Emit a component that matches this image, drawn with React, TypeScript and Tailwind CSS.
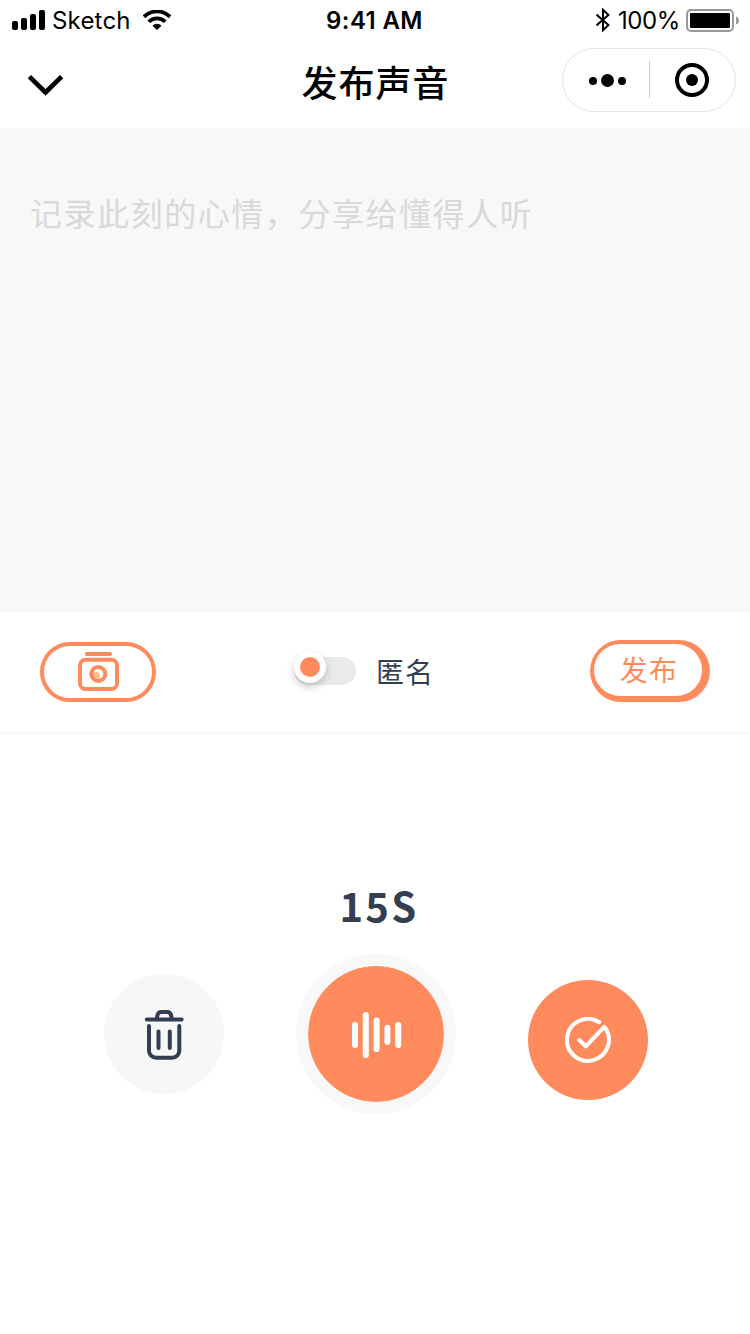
import { useState } from 'react';

function StatusBar() {
  return (
    <div className="h-10 flex items-center justify-between pl-3 pr-[11px] font-['Inter',sans-serif] text-2xl leading-none text-black">
      <div className="flex items-center w-[240px]">
        <svg className="w-[33px] h-5 shrink-0" viewBox="0 0 33 20">
          <rect x="0" y="11" width="6" height="9" rx="2" />
          <rect x="9" y="8" width="6" height="12" rx="2" />
          <rect x="18" y="4" width="6" height="16" rx="2" />
          <rect x="27" y="0" width="6" height="20" rx="2" />
        </svg>
        <span className="ml-[7px] w-[78px] pt-0.5 tracking-[0.2px] whitespace-nowrap">Sketch</span>
        <svg className="ml-[13px] w-7 h-5 shrink-0" viewBox="0 0 28 20">
          <path d="M1 6.800a18.200 18.200 0 0 1 26 0" fill="none" stroke="currentColor" strokeWidth="3.8" />
          <path d="M5.800 11.800a11.400 11.400 0 0 1 16.400 0" fill="none" stroke="currentColor" strokeWidth="3.8" />
          <path d="M9.500 15.700a6 6 0 0 1 9 0L14 20z" />
        </svg>
      </div>
      <span className="pt-0.5 pr-[2px] font-semibold tracking-[0.4px] whitespace-nowrap">9:41 AM</span>
      <div className="flex items-center justify-end w-[240px]">
        <svg className="w-[14px] h-6 shrink-0" viewBox="0 0 14 24" fill="none" stroke="currentColor" strokeWidth="2">
          <path d="M0.500 6.500l11.900 10.600L7 22.200V1.800l5.400 5.100L0.500 17.500" />
        </svg>
        <span className="ml-2 w-[62px] pt-0.5 tracking-[-0.4px] whitespace-nowrap">100%</span>
        <svg className="ml-[6px] w-[53px] h-6 shrink-0" viewBox="0 0 53 24">
          <rect x="1" y="2" width="46" height="21" rx="4" fill="none" stroke="#999999" strokeWidth="2" />
          <rect x="4" y="5" width="40" height="15" rx="1" />
          <path d="M50 8.500c2 .6 3 2 3 4s-1 3.400-3 4z" fill="#999999" />
        </svg>
      </div>
    </div>
  );
}

function NavBar() {
  return (
    <div className="h-[88px] flex items-start justify-between pl-7 pr-[14px] pt-2">
      <button className="w-[161px] h-16 flex items-center">
        <svg className="mt-[11px] w-[35px] h-[21px]" viewBox="0 0 35 21" fill="none" stroke="black" strokeWidth="4.600">
          <path d="M1.400 1.600L17.500 17.500L33.600 1.600" />
        </svg>
      </button>
      <h1 className="mt-[6px] font-['Noto_Sans_CJK_SC',sans-serif] text-[36px] leading-[54px] font-medium tracking-[1px] text-black">发布声音</h1>
      <div className="w-[174px] h-16 rounded-full border border-[#e5e5e5] flex items-center">
        <button className="w-[86px] h-full flex items-center justify-center gap-1 pl-1">
          <span className="size-2 mt-px rounded-full bg-black" />
          <span className="size-[13px] rounded-full bg-black" />
          <span className="size-2 mt-px rounded-full bg-black" />
        </button>
        <span className="w-px h-[37px] -mt-px bg-[#cccccc]" />
        <button className="flex-1 h-full flex items-center justify-center pr-px">
          <span className="size-[34px] rounded-full border-4 border-black flex items-center justify-center">
            <span className="size-3 rounded-full bg-black" />
          </span>
        </button>
      </div>
    </div>
  );
}

export default function App() {
  const [text, setText] = useState('');
  const [anonymous, setAnonymous] = useState(false);

  return (
    <div className="w-[750px] h-[1334px] bg-white flex flex-col overflow-hidden font-['Noto_Sans_CJK_SC',sans-serif]">
      <StatusBar />
      <NavBar />

      <textarea
        value={text}
        onChange={(e) => setText(e.target.value)}
        placeholder="记录此刻的心情，分享给懂得人听"
        className="block h-[484px] shrink-0 resize-none bg-[#f8f8f8] px-[30px] pt-[60px] text-[32px] leading-[48px] tracking-[1.55px] text-[#333f55] placeholder:text-[#d8d8d8] focus:outline-none"
      />

      <div className="h-[122px] shrink-0 flex items-center justify-between px-10 border-b-2 border-[#f7f7f7]">
        <button className="w-[116px] h-[60px] rounded-full border-4 border-[#ff8b5c] flex items-center justify-center">
          <svg className="w-[42px] h-10" viewBox="0 0 42 40" fill="none" stroke="#ff8b5c" strokeWidth="4" strokeLinecap="round">
            <path d="M9.700 2h23.300" />
            <rect x="3" y="7.700" width="37" height="29.300" rx="5.500" />
            <circle cx="19.300" cy="23.600" r="3.500" fill="#ffbd84" stroke="none" />
            <circle cx="21.300" cy="22" r="7" />
          </svg>
        </button>

        <div className="flex items-center mr-[18px]">
          <button onClick={() => setAnonymous(!anonymous)} className="w-[62px] h-8 flex items-center">
            <span className="w-[62px] h-7 -mt-0.5 rounded-full bg-[#ebeae8] flex items-center">
              <span className={`size-8 -mt-2 rounded-full bg-white shadow-[0_4px_8px_rgba(0,0,0,0.2)] flex items-center justify-center ${anonymous ? 'ml-[30px]' : 'ml-0'}`}>
                <span className="size-5 rounded-full bg-[#ff8b5c]" />
              </span>
            </span>
          </button>
          <span className="ml-5 -mt-0.5 text-[28px] leading-[42px] tracking-[1px] text-[#343e52]">匿名</span>
        </div>

        <button className="w-[120px] h-[62px] -mt-0.5 pl-1 pt-1 rounded-full bg-[#ff8b5c] flex items-start">
          <span className="w-[108px] h-[52px] rounded-full bg-white flex items-center justify-center pb-0.5 pl-0.5 text-[28px] leading-[42px] tracking-[1.300px] text-[#ff8b5c]">
            发布
          </span>
        </button>
      </div>

      <div className="flex-1">
        <p className="mt-[141px] pl-2 text-center text-[40px] leading-[60px] font-bold tracking-[2.3px] text-[#343e52]">15S</p>
        <div className="mt-[19px] flex items-center gap-[72px] pl-[104px]">
          <button className="size-[120px] rounded-full bg-[#f7f7f7] flex items-center justify-center">
            <svg className="w-10 h-[50px] overflow-visible" viewBox="0 0 40 50" fill="none" stroke="#343e52" strokeWidth="4" strokeLinecap="round">
              <path d="M2.800 10.500h34.800" />
              <path d="M12.800 9.500l.4-2.400C13.800 4 15 3 17 3h6.500c2 0 3.200 1 3.800 4.100l.4 2.400" />
              <path d="M5 17v24.700a7 7 0 0 0 7 7h16.300a7 7 0 0 0 7-7V17" />
              <path d="M14.500 22.500v16.500M25.800 22.500v16.500" />
            </svg>
          </button>

          <button className="size-40 rounded-full border-12 border-[#f8f8f8] bg-[#ff8b5c] bg-clip-padding flex items-center justify-center">
            <svg className="w-[50px] h-[46px] overflow-visible" viewBox="0 0 50 46" stroke="white" strokeWidth="6" strokeLinecap="round">
              <path d="M4 14v20M14.800 4v40M25.600 9.500v28.500M36.400 16.700v14.300M47.200 14v20" />
            </svg>
          </button>

          <button className="size-[120px] mt-3 rounded-full bg-[#ff8b5c] flex items-center justify-center">
            <svg className="size-[46px]" viewBox="0 0 46 46" fill="none" stroke="white" strokeWidth="4" strokeLinecap="round" strokeLinejoin="round">
              <path d="M34.200 5.200A21 21 0 1 0 39.300 9.800L20.700 29.300L14.300 23" />
            </svg>
          </button>
        </div>
      </div>
    </div>
  );
}
